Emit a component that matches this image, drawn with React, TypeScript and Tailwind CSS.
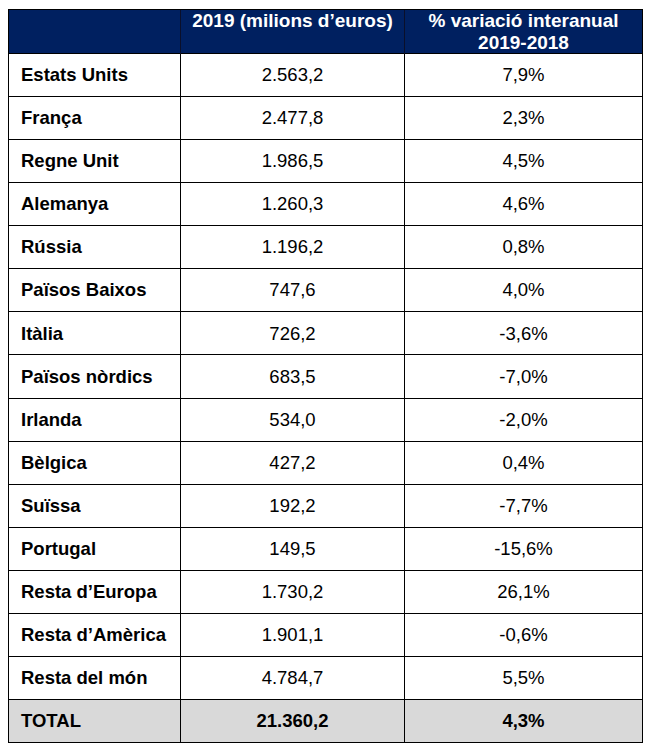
const rows: Array<[string, string, string]> = [
  ["Estats Units", "2.563,2", "7,9%"],
  ["França", "2.477,8", "2,3%"],
  ["Regne Unit", "1.986,5", "4,5%"],
  ["Alemanya", "1.260,3", "4,6%"],
  ["Rússia", "1.196,2", "0,8%"],
  ["Països Baixos", "747,6", "4,0%"],
  ["Itàlia", "726,2", "-3,6%"],
  ["Països nòrdics", "683,5", "-7,0%"],
  ["Irlanda", "534,0", "-2,0%"],
  ["Bèlgica", "427,2", "0,4%"],
  ["Suïssa", "192,2", "-7,7%"],
  ["Portugal", "149,5", "-15,6%"],
  ["Resta d’Europa", "1.730,2", "26,1%"],
  ["Resta d’Amèrica", "1.901,1", "-0,6%"],
  ["Resta del món", "4.784,7", "5,5%"],
];

export default function App() {
  return (
    <div className="w-[650px] h-[754px] bg-white pt-[9px] pl-[8px] font-['Liberation_Sans',Arial,sans-serif] text-black">
      <div className="w-[635px] border border-black">
        {/* Header */}
        <div className="grid grid-cols-[172px_224px_1fr] h-[44px] bg-[#002060] border-b border-black text-white font-bold text-[19px] leading-[22px] text-center">
          <div className="border-r border-[#0a0f2a]"></div>
          <div className="border-r border-[#0a0f2a]">2019 (milions d’euros)</div>
          <div>
            % variació interanual
            <br />
            2019-2018
          </div>
        </div>

        {/* Body */}
        {rows.map(([name, value, change]) => (
          <div
            key={name}
            className="grid grid-cols-[172px_224px_1fr] h-[43.07px] border-b border-black text-[18.5px]"
          >
            <div className="border-r border-black flex items-center pl-[12px] font-bold">{name}</div>
            <div className="border-r border-black flex items-center justify-center">{value}</div>
            <div className="flex items-center justify-center">{change}</div>
          </div>
        ))}

        {/* Total */}
        <div className="grid grid-cols-[172px_224px_1fr] h-[42px] bg-[#d9d9d9] text-[18.5px] font-bold">
          <div className="border-r border-black flex items-center pl-[12px]">TOTAL</div>
          <div className="border-r border-black flex items-center justify-center">21.360,2</div>
          <div className="flex items-center justify-center">4,3%</div>
        </div>
      </div>
    </div>
  );
}
